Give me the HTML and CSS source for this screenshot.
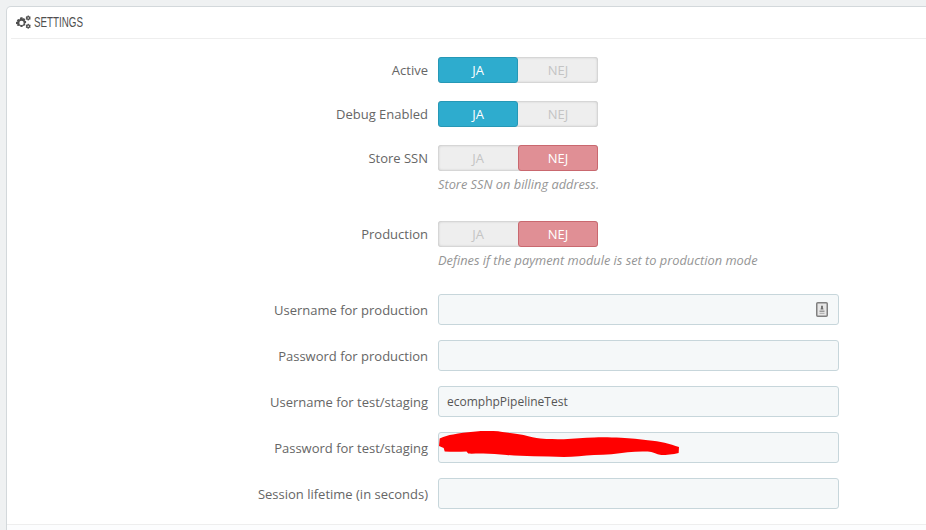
FILE: index.html
```html
<!DOCTYPE html>
<html lang="en">
<head>
<meta charset="utf-8">
<title>Settings</title>
<link rel="stylesheet" href="styles.css">
</head>
<body>
<section class="panel">
  <h3 class="panel-heading">
    <svg class="cogs" viewBox="0 0 16 15" width="16" height="15" aria-hidden="true">
      <g fill="#4f4f4f">
        <path fill-rule="evenodd" d="M4.500 2.300h2l.3 1.400 1.100-.6 1.500 1.400-.7 1.200 1.400.4v2l-1.400.4.7 1.200-1.500 1.400-1.100-.7-.3 1.500h-2l-.3-1.500-1.200.7L.8 10.500l.7-1.200L0 8.900v-2l1.500-.4-.7-1.200 1.500-1.400 1.200.6zM5.500 5.700a2.200 2.200 0 1 0 0 4.400 2.200 2.200 0 0 0 0-4.400z"/>
        <path fill-rule="evenodd" d="M12.700.5l.4 1 1-.2.6.9-.6.800.6.800-.6.900-1-.2-.4 1h-1l-.4-1-1 .2-.6-.9.600-.8-.6-.8.600-.9 1 .2.400-1zm-.5 1.800a.7.7 0 1 0 0 1.400.7.7 0 0 0 0-1.400z"/>
        <path fill-rule="evenodd" d="M12.700 8.800l.4 1 1-.2.6.9-.6.800.6.800-.6.900-1-.2-.4 1h-1l-.4-1-1 .2-.6-.9.600-.8-.6-.8.600-.9 1 .2.400-1zm-.5 1.800a.7.7 0 1 0 0 1.400.7.7 0 0 0 0-1.400z"/>
      </g>
    </svg>
    <span class="heading-text">SETTINGS</span>
  </h3>

  <form class="form">
    <div class="row">
      <span class="label">Active</span>
      <div class="control">
        <div class="switch"><span class="opt on-yes">JA</span><span class="opt">NEJ</span></div>
      </div>
    </div>
    <div class="row">
      <span class="label">Debug Enabled</span>
      <div class="control">
        <div class="switch"><span class="opt on-yes">JA</span><span class="opt">NEJ</span></div>
      </div>
    </div>
    <div class="row row-help">
      <span class="label">Store SSN</span>
      <div class="control">
        <div class="switch"><span class="opt">JA</span><span class="opt on-no">NEJ</span></div>
        <p class="help">Store SSN on billing address.</p>
      </div>
    </div>
    <div class="row row-help">
      <span class="label">Production</span>
      <div class="control">
        <div class="switch"><span class="opt">JA</span><span class="opt on-no">NEJ</span></div>
        <p class="help">Defines if the payment module is set to production mode</p>
      </div>
    </div>
    <div class="row row-input">
      <label class="label" for="f1">Username for production</label>
      <div class="control field">
        <input class="input" id="f1" type="text">
        <svg class="card" viewBox="0 0 12 15" width="12" height="15" aria-hidden="true">
          <rect x=".75" y=".75" width="10.500" height="13.500" rx="1" fill="#e6e6e6" stroke="#808080" stroke-width="1.500"/>
          <path d="M6 3.400a1 1 0 0 1 .8 1.600L7.500 7.500H4.500L5.200 5A1 1 0 0 1 6 3.400z" fill="#6e6e6e"/>
          <rect x="3.500" y="8.500" width="5" height="1.500" fill="#999"/>
          <rect x="3.500" y="10.800" width="5" height="1.200" fill="#b5b5b5"/>
        </svg>
      </div>
    </div>
    <div class="row row-input">
      <label class="label" for="f2">Password for production</label>
      <div class="control field"><input class="input" id="f2" type="text"></div>
    </div>
    <div class="row row-input">
      <label class="label" for="f3">Username for test/staging</label>
      <div class="control field"><input class="input" id="f3" type="text" value="ecomphpPipelineTest"></div>
    </div>
    <div class="row row-input">
      <label class="label" for="f4">Password for test/staging</label>
      <div class="control field">
        <input class="input" id="f4" type="text">
        <svg class="scribble" viewBox="58 18 715 76" width="240" height="26" preserveAspectRatio="none" aria-hidden="true">
          <path fill="#f00" d="M60 40C75 33 85 30 100 28C120 24 140 21 160 20C185 18 200 17 220 18C240 19 255 22 270 24C285 26 298 27 310 30C330 36 345 39 360 40C385 42 405 42 430 42C460 41 490 37 520 37C550 36 575 37 600 38C630 40 655 42 680 45C700 47 715 49 730 52C745 55 760 60 773 65L772 82C755 86 735 88 720 88C705 86 695 79 680 78C660 77 640 78 620 80C590 85 555 87 520 88C490 90 460 94 430 94C400 93 370 93 340 92C312 91 285 90 260 88C235 86 212 85 190 84C175 83 160 85 145 84L140 78C118 79 95 79 75 78L72 68L58 62Z"/>
        </svg>
      </div>
    </div>
    <div class="row row-input">
      <label class="label" for="f5">Session lifetime (in seconds)</label>
      <div class="control field"><input class="input" id="f5" type="text"></div>
    </div>
  </form>
  <div class="panel-footer"></div>
</section>
</body>
</html>
```
FILE: styles.css
```css
* { box-sizing: border-box; }
html, body { margin: 0; height: 100%; }
body {
  background: #eff1f2;
  padding: 6px 0 0 6px;
  overflow: hidden;
  font-family: "Open Sans", sans-serif;
  font-size: 13px;
  color: #666;
}
.panel {
  width: 940px;
  height: 540px;
  background: #fff;
  border: 1px solid #d3d8db;
  border-bottom: 0;
  border-radius: 5px 5px 0 0;
}
.panel-heading {
  display: flex;
  align-items: center;
  gap: 2px;
  height: 32px;
  margin: 0 0 0 4px;
  padding: 0 0 1px 5px;
  border-bottom: 1px solid #eee;
  font-weight: 400;
  font-size: 14px;
  color: #555;
}
.cogs { flex: none; }
.heading-text {
  display: inline-block;
  font-family: "Liberation Sans", sans-serif;
  font-size: 14px;
  line-height: 16px;
  color: #4f4f4f;
  transform: scaleX(.7);
  transform-origin: left center;
}
.form { padding-top: 18px; }
.row {
  display: grid;
  grid-template-columns: 421px 401px;
  column-gap: 10px;
  margin-bottom: 18px;
}
.row-help { margin-bottom: 28px; }
.row-help + .row-help { margin-bottom: 25px; }
.row-input { margin-bottom: 15px; }
.label {
  padding-top: 1px;
  text-align: right;
  line-height: 25px;
  color: #666;
}
.row-input .label { line-height: 30px; }
.switch {
  display: flex;
  width: 160px;
  height: 26px;
  border-radius: 3px;
  background: #eee;
  box-shadow: inset 0 0 3px rgba(0, 0, 0, .28);
}
.opt {
  flex: 1 1 50%;
  text-align: center;
  line-height: 26px;
  font-size: 13px;
  color: #c4c4c4;
}
.on-yes {
  background: #2eacce;
  border: 1px solid #2698b6;
  border-radius: 3px;
  color: #fff;
  line-height: 24px;
}
.on-no {
  background: #e08f95;
  border: 1px solid #c9686f;
  border-radius: 3px;
  color: #fff;
  line-height: 24px;
}
.help {
  margin: 5px 0 0;
  font-size: 12.800px;
  font-style: italic;
  line-height: 17px;
  color: #959595;
}
.field { position: relative; }
.input {
  display: block;
  width: 100%;
  height: 31px;
  padding: 0 8px;
  border: 1px solid #c7d6db;
  border-radius: 3px;
  background: #f5f8f9;
  font-family: "Open Sans", sans-serif;
  font-size: 12px;
  color: #555;
  outline: 0;
}
.card { position: absolute; top: 8px; right: 11px; }
.scribble { position: absolute; left: 1px; top: -1px; }
.panel-footer {
  height: 20px;
  background: #fcfdfe;
  border-top: 1px solid #eee;
}
```
